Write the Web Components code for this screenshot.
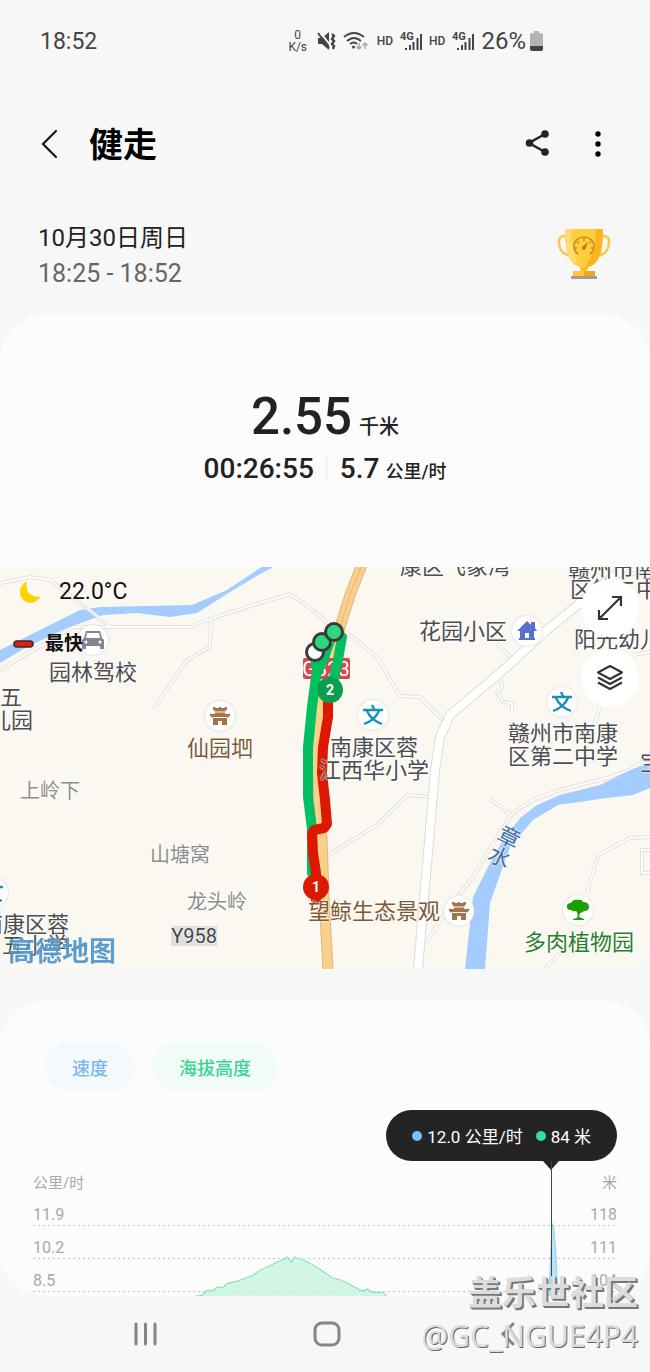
<!DOCTYPE html>
<html lang="zh-CN">
<head>
<meta charset="utf-8">
<meta name="viewport" content="width=device-width, initial-scale=1">
<title>健走</title>
<style>
    body {
        margin: 0;
        position: relative;
        background: #f7f7f7;
        color: #222;
        font-family: Roboto, "Noto Sans CJK SC", sans-serif;
    }
</style>
</head>
<body>
<status-bar></status-bar>
<app-header>健走</app-header>
<workout-date>
    <span slot="day">10月30日周日</span>
    <span slot="time">18:25 - 18:52</span>
</workout-date>
<workout-stats></workout-stats>
<route-map></route-map>
<chart-card></chart-card>
<nav-bar></nav-bar>
<water-mark>
    <span slot="site">盖乐世社区</span>
    <span slot="user">@GC_NGUE4P4</span>
</water-mark>

<script>
// attach an open root and fill it from a template
class BaseElement extends HTMLElement {
    constructor() {
        super();
        var template = document.createElement("template");
        template.innerHTML = this.html();
        this.attachShadow({mode: "open"});
        this.shadowRoot.appendChild(template.content.cloneNode(true));
    }
}

class StatusBar extends BaseElement {
    html() {
        return `
<style>
    :host {
        display: flex;
        align-items: center;
        height: 82px;
        padding: 0 107px 0 40px;
        color: #444;
        font-size: 24px;
    }
    .time { flex: 1; font-size: 23px; }
    .icons { display: flex; align-items: center; }
    .speed { font-size: 12px; line-height: 12px; text-align: center; width: 20px; margin-right: 9px; }
    .hd { font-size: 12px; font-weight: 500; margin: 0 7px 0 8px; }
    .hd + svg + .hd { margin-left: 6px; }
    .wifi { margin-left: 7px; }
    .percent { margin-left: 6px; }
    .battery { margin-left: 4px; }
    text { font: 700 11px Roboto, sans-serif; }
    svg { display: block; }
</style>
<div class="time">18:52</div>
<div class="icons">
    <div class="speed">0<br>K/s</div>
    <svg width="19" height="20" viewBox="0 0 19 20">
        <path d="M1 7h4l7-6v18l-7-6H1z" fill="#444"/>
        <path d="M2 0l12 15" stroke="#f7f7f7" stroke-width="2"/>
        <path d="M1 2l11 15" stroke="#444" stroke-width="2"/>
        <path d="M15 3l2 2-2 3 2 2-2 3 2 2-1 3" stroke="#444" stroke-width="2.400" fill="none"/>
    </svg>
    <svg class="wifi" width="26" height="20" viewBox="0 0 26 20" fill="none" stroke="#444" stroke-width="2">
        <path d="M1 6q10-8 20 0M4 10q7-6 14 0M7 13q4-3 7 0"/>
        <circle cx="10.500" cy="16" r="1.500" fill="#444" stroke="none"/>
        <path d="M16 12v6M13.500 15.500l2.500 2.500 2.500-2.500M22 18v-6M19.500 14.500l2.500-2.500 2.500 2.500" stroke="#aaa" stroke-width="1.500"/>
    </svg>
    <span class="hd">HD</span>
    <svg width="23" height="20" viewBox="0 0 23 20">
        <text x="0" y="9" fill="#444">4G</text>
        <path d="M6 17v2M10 14v5M13.500 11v8M17.500 7v12M21 3v16" stroke="#444" stroke-width="2"/>
    </svg>
    <span class="hd">HD</span>
    <svg width="23" height="20" viewBox="0 0 23 20">
        <text x="0" y="9" fill="#444">4G</text>
        <path d="M6 17v2M10 14v5M13.500 11v8M17.500 7v12M21 3v16" stroke="#444" stroke-width="2"/>
    </svg>
    <span class="percent">26%</span>
    <svg class="battery" width="13" height="20" viewBox="0 0 13 20">
        <path d="M4 0h5v2h2q2 0 2 2v12H0V4q0-2 2-2h2z" fill="#b4b4b4"/>
        <path d="M0 15h13v3q0 2-2 2H2q-2 0-2-2z" fill="#444"/>
    </svg>
</div>`;
    }
}

class AppHeader extends BaseElement {
    html() {
        return `
<style>
    :host { display: flex; align-items: center; height: 124px; padding: 0 34px 0 31px; }
    h1 { flex: 1; margin: 0; padding-top: 2px; font-size: 34px; line-height: 48px; font-weight: 700; color: #000; }
    button { border: 0; background: none; padding: 0; width: 36px; height: 48px; display: grid; place-items: center; }
    .back { margin-right: 22px; }
    .share { margin-right: 25px; }
</style>
<button class="back" aria-label="返回">
    <svg width="18" height="30" viewBox="0 0 18 30"><path d="M16 2L3 15l13 13" fill="none" stroke="#111" stroke-width="2.200" stroke-linecap="round"/></svg>
</button>
<h1><slot></slot></h1>
<button class="share" aria-label="分享">
    <svg width="24" height="28" viewBox="0 0 24 28" fill="#222">
        <path d="M20 4L4 13l16 9" fill="none" stroke="#222" stroke-width="2.500"/>
        <circle cx="20" cy="4" r="3.800"/><circle cx="4.500" cy="13" r="3.800"/><circle cx="20" cy="22" r="3.800"/>
    </svg>
</button>
<button aria-label="更多选项">
    <svg width="6" height="26" viewBox="0 0 6 26"><circle cx="3" cy="3" r="2.700"/><circle cx="3" cy="13" r="2.700"/><circle cx="3" cy="23" r="2.700"/></svg>
</button>`;
    }
}

class WorkoutDate extends BaseElement {
    html() {
        return `
<style>
    :host { display: flex; justify-content: space-between; padding: 14px 38px 23px; font-size: 25px; line-height: 36px; }
    .day { font-size: 24px; }
    .time { color: #666; }
    svg { margin-top: 8px; }
</style>
<div>
    <div class="day"><slot name="day"></slot></div>
    <div class="time"><slot name="time"></slot></div>
</div>
<svg width="56" height="52" viewBox="0 0 56 52">
    <path d="M12 8H8Q3 8 3 14q0 12 12 14M44 8h4q5 0 5 6 0 12-12 14" fill="none" stroke="#fdc648" stroke-width="2.400"/>
    <path d="M23 36h10l-2 7h-6z" fill="#fdb92c"/>
    <path d="M9 1h38q0 17-3 26-4 12-16 13-12-1-16-13Q9 18 9 1z" fill="#ffcd3e"/>
    <path d="M40 1h7q0 17-3 26-4 12-16 13 11-12 12-39z" fill="#ffb31c"/>
    <path d="M9 1h6q0 20 7 36-8-3-10-10Q9 18 9 1z" fill="#ffda72"/>
    <path d="M17 43h22v6H17z" fill="#ffc43a"/><path d="M28 43h11v6H28z" fill="#f3a51e"/>
    <path d="M15 48h26v3H15z" fill="#a79a91"/>
    <path d="M22 26q-4-3-4-8a10 9 0 0 1 20 0q0 5-4 8M28 9v4M21 14l2 1M35 14l-2 1M19 20h2M37 20h-2" fill="none" stroke="#c98f20" stroke-width="1.600"/>
    <path d="M32 14l-2 6a2 2 0 1 1-3-2z" fill="#b97f17"/>
</svg>`;
    }
}

class WorkoutStats extends BaseElement {
    html() {
        return `
<style>
    :host {
        display: block;
        padding: 72px 0 78px;
        border-radius: 45px 45px 0 0;
        background: #fcfcfc;
        font-weight: 500;
        text-align: center;
    }
    .distance { font-size: 51px; line-height: 60px; margin-bottom: 2px; }
    .distance small { font-size: 20px; line-height: 20px; margin-left: 7px; }
    .row { display: flex; justify-content: center; align-items: center; height: 40px; font-size: 28px; line-height: 28px; }
    .row span + span { border-left: 1px solid #eee; padding-left: 13px; margin-left: 12px; }
    .row small { font-size: 18px; line-height: 18px; margin-left: 6px; }
</style>
<div class="distance">2.55<small>千米</small></div>
<div class="row"><span>00:26:55</span><span>5.7<small>公里/时</small></span></div>`;
    }
}

// a name or an icon pinned on the map; x and y are map units
class MapPin extends HTMLElement {
    connectedCallback() {
        this.attachShadow({mode: "open"});
        var icon = MapPin.icons[this.getAttribute("icon")];
        this.shadowRoot.innerHTML = `
<style>
    :host {
        position: absolute;
        left: calc(${this.getAttribute("x")} * 100% / 650);
        top: calc(${this.getAttribute("y")} * 100% / 402);
        transform: translate(-50%, -50%);
        white-space: nowrap;
        text-align: center;
        color: #4c4c52;
        font-size: 22px;
        line-height: 23px;
        text-shadow: 0 0 2px #fff, 0 0 2px #fff;
    }
    :host([kind=place]) { color: #8d8d8d; font-size: 20px; }
    :host([kind=sight]) { color: #7d5a36; }
    :host([kind=park]) { color: #2b7d2b; }
    :host([kind=river]) { color: #3d6e9e; line-height: 22px; transform: translate(-50%, -50%) rotate(26deg); }
    :host([kind=road]) { color: #444; background: #dedede; font-size: 20px; line-height: 20px; }
    svg { display: block; filter: drop-shadow(0 0 1px #ccc); }
</style>` + (icon ? `<svg width="32" height="32" viewBox="-16 -16 32 32"><circle r="15" fill="#fff"/>${icon}</svg>` : `<slot></slot>`);
    }
}
MapPin.icons = {
    car: `<path d="M-7-9H7L9-2q2 1 2 3v8H7V6H-7v3h-4V1q0-2 2-3zM-6-7l-1 5H7L6-7z" fill="#84868c" fill-rule="evenodd"/><circle cx="-7" cy="2" r="1.500" fill="#fff"/><circle cx="7" cy="2" r="1.500" fill="#fff"/>`,
    temple: `<path d="M-7-9h2l1 1h3v-1h2v1h3l1-1h2v2L5-4v2h4l1-1v3L7 2v7H2V5h-4v4h-5V2l-3-2v-3l1 1h4v-2l-2-3z" fill="#a5754a"/><path d="M-6-4H6M-7 1.500H7" stroke="#fff"/>`,
    school: `<path d="M-1-10l2 4M-10-5h20M-6-4Q-2 5 9 9M6-4Q2 5-9 9" fill="none" stroke="#1691b5" stroke-width="2.300"/>`,
    home: `<path d="M0-10l4 4v-3h4v6l2 3H7v7h1v2H-8V7h1V0h-3z" fill="#5a70cc"/><path d="M-2 2h4v5h-4z" fill="#fff"/>`,
    tree: `<path d="M-7 0q-5 0-4-5 1-2 4-2 2-4 7-3 4-1 5 2 6 0 6 5 0 4-5 4-2 2-4 2L1 7l5 2v1H-5V9l4-1Q1 4-2 1-5 2-7 0z" fill="#18a000"/>`
};

class RouteMap extends BaseElement {
    html() {
        return `
<style>
    :host { display: block; position: relative; overflow: hidden; background: #fbf8f2; border-radius: 0 0 24px 24px; }
    .map { display: block; width: 100%; height: auto; }
    .minor { fill: none; stroke: #e4e2dd; stroke-width: 4; }
    .minor + .minor { stroke: #fdfcf9; stroke-width: 2; }
    .route { fill: none; stroke-width: 10; stroke-linejoin: round; stroke-linecap: round; }
    .mark { font: 700 14px Roboto, sans-serif; fill: #fff; text-anchor: middle; }
    .legend { position: absolute; left: 13px; top: 10px; color: #111; }
    .legend div { display: flex; align-items: center; }
    .weather { font-size: 23px; line-height: 30px; gap: 17px; padding-left: 6px; }
    .fastest { font-size: 19px; line-height: 28px; margin-top: 23px; gap: 11px; font-weight: 700; }
    .tools { position: absolute; right: 11px; top: 12px; display: grid; gap: 12px; }
    button { width: 58px; height: 58px; border: 0; border-radius: 50%; background: #fff; padding: 0; display: grid; place-items: center; }
    .logo { position: absolute; left: 8px; bottom: 1px; font-size: 27px; line-height: 32px; font-weight: 700; color: #4b93c9; text-shadow: 0 0 2px #fff; opacity: .9; }
</style>
<svg class="map" viewBox="0 0 650 402">
    <defs>
        <path id="paths" d="M0 16L30 10 50 13 80 36 110 60H190L213 51 260 36 290 27 313 43 328 56 350 68 377 90 400 129 420 130 443 153M211 53l-1 27-23 13-34 50M0 103L73 60h37M500 106l2 14-5 5 6 10 9 1v10M497 76l13 14M600 140l-5 16M633 88l17-3M620 12l30-12M325 290l52-32 30-30 23 2M427 375l20-32 26-33 24-40 16-24 20-13 27-10 47-12 23-8 20-13M490 233l12 7 8 8M650 270l-20 1-32 17-11 38M560 386l-15 16M660 283h-18v23h18"/>
    </defs>
    <use class="minor" href="#paths"/><use class="minor" href="#paths"/>
    <path d="M0 83L80 43 100 40 192 38 227 23 260 1 272-5V1L260 7 230 25 197 46 170 50 137 46 103 48 67 61 27 80 0 96z" fill="#a4ccff"/>
    <path d="M80 36l26 20" stroke="#f1efea" stroke-width="3"/>
    <path d="M650 196L630 203 600 218 560 228 537 238 520 251 502 275 488 300 473 330 465 402H485L490 336 510 280 533 253 558 238 607 231 633 228 650 221z" fill="#a4ccff"/>
    <g fill="none">
        <path d="M632-6L580 36 547 63 500 106 450 148 440 170 435 203 428 286 423 343 418 402" stroke="#dedcd8" stroke-width="10"/>
        <path d="M632-6L580 36 547 63 500 106 450 148 440 170 435 203 428 286 423 343 418 402" stroke="#fff" stroke-width="8"/>
        <path d="M363-5L350 28 340 60 331 100 321 135 317 190 319 240 322 270 324 330 328 402" stroke="#e0b878" stroke-width="11"/>
        <path d="M363-5L350 28 340 60 331 100 321 135 317 190 319 240 322 270 324 330 328 402" stroke="#f8d08c" stroke-width="9"/>
        <path d="M363-5L350 28 340 60" stroke="#e0b878"/>
    </g>
    <rect x="303" y="91" width="47" height="21" rx="2" fill="#d8464f"/>
    <text x="326" y="109" fill="#fff" font-size="20" text-anchor="middle">G323</text>
    <path class="route" stroke="#02bf62" d="M318 95L312 140 308 180 308 230 312 262V306M342 70L338 93 332 120"/>
    <path d="M310 92l14-8 12-12-8 22-7 14h-8z" fill="#02bf62"/>
    <path class="route" stroke="#dd1800" d="M328 136V150L323 180 322 206 325 233 327 257 324 261 314 263 312 267 313 286 316 306V333"/>
    <g stroke="#3b3b3b" stroke-width="3">
        <circle cx="315" cy="85" r="8.500" fill="#fff"/>
        <circle cx="322" cy="75" r="8.500" fill="#2fd77c"/>
        <circle cx="334" cy="65" r="8.500" fill="#2fd77c"/>
    </g>
    <circle cx="330" cy="123" r="13" fill="#0a9f50"/><text class="mark" x="330" y="128">2</text>
    <circle cx="316" cy="320" r="13" fill="#dd1800"/><text class="mark" x="316" y="325">1</text>
</svg>
<map-pin x="455" y="-1">康区飞象湾</map-pin>
<map-pin x="463" y="64">花园小区</map-pin>
<map-pin icon="home" x="527" y="64"></map-pin>
<map-pin x="612" y="2">赣州市南</map-pin>
<map-pin x="614" y="22">区第二中</map-pin>
<map-pin x="618" y="72">阳光幼儿</map-pin>
<map-pin icon="school" x="562" y="135"></map-pin>
<map-pin x="563" y="178">赣州市南康<br>区第二中学</map-pin>
<map-pin icon="school" x="373" y="148"></map-pin>
<map-pin x="374" y="192">南康区蓉<br>江西华小学</map-pin>
<map-pin icon="temple" x="220" y="149"></map-pin>
<map-pin kind="sight" x="220" y="181">仙园垇</map-pin>
<map-pin icon="car" x="93" y="73"></map-pin>
<map-pin x="93" y="105">园林驾校</map-pin>
<map-pin x="11" y="142">五<br>儿园</map-pin>
<map-pin kind="place" x="50" y="224">上岭下</map-pin>
<map-pin kind="place" x="180" y="288">山塘窝</map-pin>
<map-pin kind="place" x="217" y="335">龙头岭</map-pin>
<map-pin kind="road" x="194" y="369">Y958</map-pin>
<map-pin kind="sight" x="374" y="344">望鲸生态景观</map-pin>
<map-pin icon="temple" x="459" y="344"></map-pin>
<map-pin icon="tree" x="578" y="343"></map-pin>
<map-pin kind="park" x="579" y="375">多肉植物园</map-pin>
<map-pin kind="river" x="504" y="281">章<br>水</map-pin>
<map-pin x="651" y="195">宝</map-pin>
<map-pin icon="school" x="-7" y="325"></map-pin>
<map-pin x="25" y="357">南康区蓉</map-pin>
<map-pin x="35" y="378">五小学</map-pin>
<div class="legend">
    <div class="weather">
        <svg width="23" height="24" viewBox="0 0 23 24"><path d="M8 1Q6 11 12 15q5 3 10 1-4 7-11 7Q1 21 1 12 1 5 8 1z" fill="#fbd400"/></svg>
        <span>22.0°C</span>
    </div>
    <div class="fastest">
        <svg width="21" height="8" viewBox="0 0 21 8"><rect x="1" y="1" width="19" height="6" rx="3" fill="#dd2011" stroke="#3c2b2b" stroke-width="1.500"/></svg>
        <span>最快</span>
    </div>
</div>
<div class="tools">
    <button aria-label="展开">
        <svg width="26" height="26" viewBox="0 0 26 26" fill="none" stroke="#333" stroke-width="2.200"><path d="M2 24L24 2M15 2h9v9M2 15v9h9"/></svg>
    </button>
    <button aria-label="图层">
        <svg width="28" height="28" viewBox="0 0 28 28" fill="none" stroke="#333" stroke-width="2" stroke-linejoin="round"><path d="M14 2l12 6.500-12 6.500L2 8.500zM2 13.500L14 20l12-6.500M2 18.500L14 25l12-6.500"/></svg>
    </button>
</div>
<div class="logo">高德地图</div>`;
    }
}

class ChartCard extends BaseElement {
    html() {
        return `
<style>
    :host {
        display: block;
        position: relative;
        margin-top: 32px;
        padding: 41px 33px 0;
        border-radius: 45px;
        background: #fcfcfc;
        overflow: hidden;
    }
    .chips { display: flex; gap: 17px; padding-left: 12px; margin-bottom: 82px; }
    button { border: 0; border-radius: 25px; height: 49px; padding: 0 27px; font: 500 18px Roboto, "Noto Sans CJK SC", sans-serif; }
    .speed { background: #f4f9fd; color: #7cb8ed; }
    .height { background: #f1fcf8; color: #3bd394; }
    .line { display: flex; justify-content: space-between; color: #a9a9a9; font-size: 16px; line-height: 22px; }
    .units { font-size: 15px; line-height: 20px; }
    .plot { display: grid; }
    .rows, .plot svg { grid-area: 1 / 1; }
    .rows { padding-bottom: 4px; }
    .rows .line {
        height: 22px;
        padding-top: 11px;
        background: repeating-linear-gradient(90deg, #c4c4c4 0 2px, transparent 2px 5px) bottom / 100% 1px no-repeat;
    }
    .plot svg { width: 100%; height: 100%; }
    .tip {
        position: absolute;
        right: 33px;
        top: 109px;
        display: flex;
        align-items: center;
        height: 51px;
        padding: 0 26px;
        border-radius: 26px;
        background: #242424;
        color: #fff;
        font-size: 17px;
    }
    .tip::before { content: ""; position: absolute; right: 58px; top: 51px; border: 8px solid transparent; border-top: 9px solid #242424; border-bottom: 0; }
    .tip::after { content: ""; position: absolute; right: 65px; top: 51px; width: 1px; height: 130px; background: #444; }
    i { width: 10px; height: 10px; border-radius: 50%; background: #78bfff; margin-right: 5px; }
    i.g { background: #36df9b; margin-left: 13px; }
</style>
<div class="chips"><button class="speed">速度</button><button class="height">海拔高度</button></div>
<div class="line units"><span>公里/时</span><span>米</span></div>
<div class="plot">
    <div class="rows">
        <div class="line"><span>11.9</span><span>118</span></div>
        <div class="line"><span>10.2</span><span>111</span></div>
        <div class="line"><span>8.5</span><span>104</span></div>
    </div>
    <svg viewBox="0 0 583 103" preserveAspectRatio="none">
        <path d="M162 103L169 102 174 97 180 97 184 94 190 94 194 90 204 88 220 82 225 78 244 69 254 64 258 69 261 64 270 67 280 72 292 80 299 85 305 86 312 89 329 98 334 96 339 99 349 99 353 103" fill="#bff3da" fill-opacity=".7" stroke="#7fd9b0"/>
        <path d="M515 103L517 60 518 30 520 36 522 60 524 103z" fill="#a5dbf7" fill-opacity=".8" stroke="#8fd0f0"/>
    </svg>
</div>
<div class="tip"><i></i>12.0 公里/时<i class="g"></i>84 米</div>`;
    }
}

class NavBar extends BaseElement {
    html() {
        return `
<style>
    :host { display: flex; height: 76px; padding: 0 52px 0 56px; }
    button { flex: 1; border: 0; background: none; padding: 0; display: grid; place-items: center; }
    svg { fill: none; stroke: #858585; stroke-width: 3; stroke-linecap: round; }
</style>
<button aria-label="最近"><svg width="26" height="28" viewBox="0 0 26 28"><path d="M3 4v20M12.500 4v20M22 4v20"/></svg></button>
<button aria-label="主页"><svg width="28" height="28" viewBox="0 0 28 28"><rect x="2" y="3" width="24" height="22" rx="7"/></svg></button>
<button aria-label="返回"><svg width="16" height="28" viewBox="0 0 16 28"><path d="M13 4L3 14l10 10"/></svg></button>`;
    }
}

class WaterMark extends BaseElement {
    html() {
        return `
<style>
    :host {
        position: absolute;
        right: 12px;
        bottom: 14px;
        text-align: right;
        color: #dcdcdc;
        text-shadow: 1px 1px 0 #777, 2px 2px 0 #777;
        font-family: "Noto Sans", "Noto Sans CJK SC", sans-serif;
        pointer-events: none;
    }
    .site { font-size: 34px; line-height: 44px; font-weight: 700; }
    .user { font-size: 30px; line-height: 44px; text-shadow: 1px 1px 0 #666; }
</style>
<div class="site"><slot name="site"></slot></div>
<div class="user"><slot name="user"></slot></div>`;
    }
}

customElements.define("status-bar", StatusBar);
customElements.define("app-header", AppHeader);
customElements.define("workout-date", WorkoutDate);
customElements.define("workout-stats", WorkoutStats);
customElements.define("map-pin", MapPin);
customElements.define("route-map", RouteMap);
customElements.define("chart-card", ChartCard);
customElements.define("nav-bar", NavBar);
customElements.define("water-mark", WaterMark);
</script>
</body>
</html>
